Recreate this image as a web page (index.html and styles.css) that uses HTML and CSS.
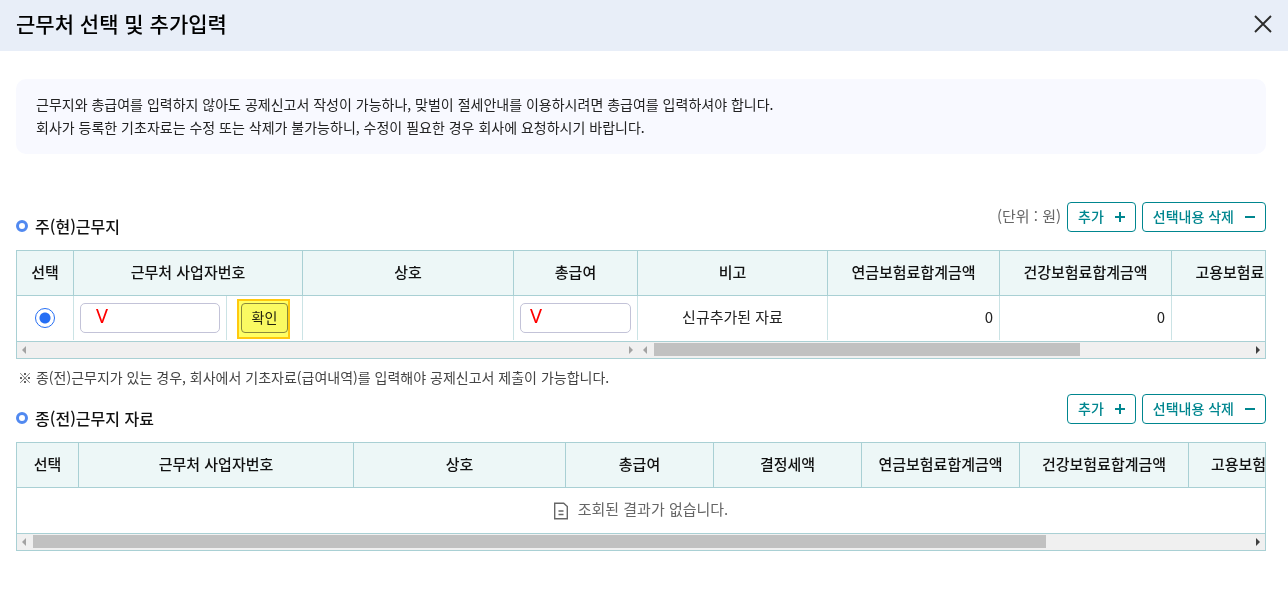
FILE: index.html
```html
<!DOCTYPE html>
<html lang="ko">
<head>
  <meta charset="UTF-8" />
  <meta name="viewport" content="width=device-width, initial-scale=1" />
  <title>근무처 선택 및 추가입력</title>
  <link rel="stylesheet" href="styles.css">
</head>
<body>
  <header class="popup-header">
    <h1>근무처 선택 및 추가입력</h1>
    <button type="button" class="btn-close" aria-label="닫기">
      <svg width="18" height="18" viewBox="0 0 18 18"><path d="M1 1l16 16M17 1L1 17" fill="none" stroke="#2b2b2b" stroke-width="1.9"/></svg>
    </button>
  </header>

  <main class="popup-body">
    <div class="notice">
      <p>근무지와 총급여를 입력하지 않아도 공제신고서 작성이 가능하나, 맞벌이 절세안내를 이용하시려면 총급여를 입력하셔야 합니다.</p>
      <p>회사가 등록한 기초자료는 수정 또는 삭제가 불가능하니, 수정이 필요한 경우 회사에 요청하시기 바랍니다.</p>
    </div>

    <!-- 주(현)근무지 -->
    <div class="section-head">
      <h2>주(현)근무지</h2>
      <div class="actions">
        <span class="unit">(단위 : 원)</span>
        <button type="button" class="btn"><span>추가</span>
          <svg width="10" height="10" viewBox="0 0 10 10"><path d="M5 0v10M0 5h10" stroke="currentColor" stroke-width="2"/></svg>
        </button>
        <button type="button" class="btn"><span>선택내용 삭제</span>
          <svg width="10" height="10" viewBox="0 0 10 10"><path d="M0 5h10" stroke="currentColor" stroke-width="2"/></svg>
        </button>
      </div>
    </div>

    <div class="grid">
      <div class="grid-view">
        <table class="table-main">
          <colgroup>
            <col class="w57"><col class="w153"><col class="w76"><col class="w211"><col class="w124"><col class="w190"><col class="w172"><col class="w172"><col class="w172">
          </colgroup>
          <thead>
            <tr>
              <th>선택</th>
              <th colspan="2">근무처 사업자번호</th>
              <th>상호</th>
              <th>총급여</th>
              <th>비고</th>
              <th>연금보험료합계금액</th>
              <th>건강보험료합계금액</th>
              <th>고용보험료합계금액</th>
            </tr>
          </thead>
          <tbody>
            <tr>
              <td><input type="radio" name="workplace" aria-label="선택" checked></td>
              <td><input type="text" class="field" aria-label="근무처 사업자번호" value="V"></td>
              <td><span class="marked"><button type="button" class="btn-confirm">확인</button></span></td>
              <td></td>
              <td><input type="text" class="field field-pay" aria-label="총급여" value="V"></td>
              <td class="text">신규추가된 자료</td>
              <td class="text num">0</td>
              <td class="text num">0</td>
              <td></td>
            </tr>
          </tbody>
        </table>
      </div>
      <div class="scroll-row">
        <div class="scrollbar scrollbar-fixed">
          <i class="arrow left"></i>
          <div class="track"></div>
          <i class="arrow right"></i>
        </div>
        <div class="scrollbar">
          <i class="arrow left"></i>
          <div class="track"><div class="thumb" style="width:71.6%"></div></div>
          <i class="arrow right active"></i>
        </div>
      </div>
    </div>

    <p class="guide">※ 종(전)근무지가 있는 경우, 회사에서 기초자료(급여내역)를 입력해야 공제신고서 제출이 가능합니다.</p>

    <!-- 종(전)근무지 -->
    <div class="section-head">
      <h2>종(전)근무지 자료</h2>
      <div class="actions">
        <button type="button" class="btn"><span>추가</span>
          <svg width="10" height="10" viewBox="0 0 10 10"><path d="M5 0v10M0 5h10" stroke="currentColor" stroke-width="2"/></svg>
        </button>
        <button type="button" class="btn"><span>선택내용 삭제</span>
          <svg width="10" height="10" viewBox="0 0 10 10"><path d="M0 5h10" stroke="currentColor" stroke-width="2"/></svg>
        </button>
      </div>
    </div>

    <div class="grid">
      <div class="grid-view">
        <table class="table-prev">
          <colgroup>
            <col class="w62"><col class="w275"><col class="w212"><col class="w148"><col class="w148"><col class="w158"><col class="w169"><col class="w169">
          </colgroup>
          <thead>
            <tr>
              <th>선택</th>
              <th>근무처 사업자번호</th>
              <th>상호</th>
              <th>총급여</th>
              <th>결정세액</th>
              <th>연금보험료합계금액</th>
              <th>건강보험료합계금액</th>
              <th>고용보험료합계금액</th>
            </tr>
          </thead>
        </table>
        <div class="empty">
          <svg width="14" height="18" viewBox="0 0 14 18" fill="none" stroke="#666" stroke-width="1.4"><path d="M.7 1.2h9l3.6 3.4v12.2H.7z"/><path d="M4.5 9h5M4.5 12.5h5"/></svg>
          <span>조회된 결과가 없습니다.</span>
        </div>
      </div>
      <div class="scroll-row">
        <div class="scrollbar">
          <i class="arrow left"></i>
          <div class="track"><div class="thumb" style="width:83.3%"></div></div>
          <i class="arrow right active"></i>
        </div>
      </div>
    </div>
  </main>
</body>
</html>
```
FILE: styles.css
```css
* {
  box-sizing: border-box;
}
body {
  margin: 0;
  background: #fff;
  color: #222;
  font-family: "Noto Sans CJK KR", sans-serif;
  font-size: 15px;
}
h1, h2, p {
  margin: 0;
}
button, input {
  font-family: inherit;
  margin: 0;
}
button {
  cursor: pointer;
}
svg {
  display: block;
  flex: none;
}

/* header */
.popup-header {
  display: flex;
  align-items: center;
  justify-content: space-between;
  height: 51px;
  padding: 0 16px 4px;
  background: #e8eef8;
}
.popup-header h1 {
  font-size: 21px;
  font-weight: 500;
  line-height: 28px;
  padding-bottom: 2px;
  color: #000;
}
.btn-close {
  padding: 0;
  border: 0;
  background: none;
}

.popup-body {
  padding: 28px 22px 24px 16px;
}
.notice {
  margin-bottom: 48px;
  padding: 14px 20px 15px;
  border-radius: 10px;
  background: #f8f9ff;
  font-size: 14px;
  line-height: 23px;
}

/* section title + buttons */
.section-head {
  display: flex;
  align-items: flex-end;
  justify-content: space-between;
  margin-bottom: 12px;
}
.section-head h2 {
  display: flex;
  align-items: center;
  gap: 7px;
  font-size: 16px;
  font-weight: 500;
  line-height: 24px;
  color: #111;
}
.section-head h2::before {
  content: "";
  box-sizing: border-box;
  width: 12px;
  height: 12px;
  border: 3px solid #5189f0;
  border-radius: 50%;
}
.actions {
  display: flex;
  align-items: center;
  gap: 6px;
  margin-bottom: 6px;
}
.unit {
  padding-bottom: 3px;
  color: #666;
}
.btn {
  display: flex;
  align-items: center;
  gap: 11px;
  height: 30px;
  padding: 0 10px;
  border: 1px solid #00868f;
  border-radius: 4px;
  background: #fff;
  color: #00868f;
  font-size: 14px;
  font-weight: 500;
}
.btn span {
  padding-bottom: 2px;
}

/* grid */
.grid {
  border: 1px solid #a9d0d4;
}
.grid-view {
  overflow: hidden;
  border-bottom: 1px solid #a9d0d4;
}
table {
  table-layout: fixed;
  border-collapse: separate;
  border-spacing: 0;
}
.table-main {
  width: 1327px;
  margin-bottom: 1px;
}
.table-prev {
  width: 1341px;
}
.w57 { width: 57px; }
.w62 { width: 62px; }
.w76 { width: 76px; }
.w124 { width: 124px; }
.w148 { width: 148px; }
.w153 { width: 153px; }
.w158 { width: 158px; }
.w169 { width: 169px; }
.w172 { width: 172px; }
.w190 { width: 190px; }
.w211 { width: 211px; }
.w212 { width: 212px; }
.w275 { width: 275px; }
th {
  height: 45px;
  padding: 0 6px 4px;
  border-right: 1px solid #a9d0d4;
  border-bottom: 1px solid #a9d0d4;
  background: #edf7f7;
  color: #111;
  font-weight: 500;
  white-space: nowrap;
}
td {
  height: 44px;
  padding: 0 6px;
  border-right: 1px solid #cbe3e5;
  text-align: center;
}
td.text {
  padding-bottom: 4px;
}
td.num {
  text-align: right;
}

.field {
  display: block;
  width: 100%;
  height: 30px;
  padding: 0 6px 5px 15px;
  border: 1px solid #c3c3d8;
  border-radius: 5px;
  background: #fff;
  color: #f00;
  font-family: "Noto Sans", sans-serif;
  font-size: 20px;
}
.field-pay {
  padding-left: 9px;
}
input[type="radio"] {
  appearance: none;
  display: block;
  width: 20px;
  height: 20px;
  margin: 0 auto;
  border: 1px solid #256ef4;
  border-radius: 50%;
  background: radial-gradient(circle, #256ef4 5px, #fff 6px);
}
.btn-confirm {
  display: block;
  width: 47px;
  height: 30px;
  padding: 0 0 3px;
  border: 1px solid #8a8a96;
  border-radius: 4px;
  background: #fafafa;
  color: #222;
  font-size: 14px;
}
/* yellow highlight over the confirm button */
.marked {
  display: block;
  position: relative;
  width: 47px;
  margin: 0 auto;
}
.marked::after {
  content: "";
  box-sizing: border-box;
  position: absolute;
  inset: -4px -2px -6px -4px;
  border: 2px solid #ffc90e;
  background: #ffff64;
  mix-blend-mode: multiply;
  pointer-events: none;
}

.empty {
  display: flex;
  align-items: center;
  justify-content: center;
  gap: 10px;
  height: 45px;
  color: #666;
}
.empty span {
  padding-bottom: 4px;
}

/* scrollbar */
.scroll-row {
  display: flex;
  height: 16px;
  background: #f0f0f0;
}
.scrollbar {
  display: flex;
  flex: 1;
  align-items: center;
  padding: 0 5px 1px;
}
.scrollbar-fixed {
  flex: 0 0 621px;
}
.track {
  flex: 1;
  height: 13px;
  margin: 0 7px;
}
.thumb {
  height: 100%;
  background: #c1c1c1;
}
.arrow {
  width: 0;
  height: 0;
  border: 4px solid transparent;
}
.arrow.left {
  border-left: 0;
  border-right: 4px solid #a3a3a3;
}
.arrow.right {
  border-right: 0;
  border-left: 4px solid #a3a3a3;
}
.arrow.active {
  border-left-color: #404040;
}

.guide {
  padding: 7px 0 5px 2px;
  color: #444;
  font-size: 14px;
  line-height: 23px;
}
```
